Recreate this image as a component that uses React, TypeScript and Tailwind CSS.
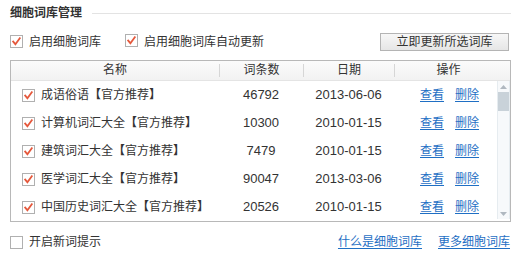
import React from "react";

const font = { fontFamily: '"Liberation Sans", "Noto Sans CJK SC", sans-serif' };

function Check({ checked }: { checked: boolean }) {
  return (
    <span className="inline-flex h-[13px] w-[13px] shrink-0 items-center justify-center border border-[#b0b0b0] bg-white">
      {checked && (
        <svg width="11" height="11" viewBox="0 0 11 11">
          <path d="M2.2 5.6 L4.4 8.2 L8.8 2.2" fill="none" stroke="#e5583c" strokeWidth="1.8" strokeLinecap="square" />
        </svg>
      )}
    </span>
  );
}

const rows = [
  { name: "成语俗语", count: "46792", date: "2013-06-06" },
  { name: "计算机词汇大全", count: "10300", date: "2010-01-15" },
  { name: "建筑词汇大全", count: "7479", date: "2010-01-15" },
  { name: "医学词汇大全", count: "90047", date: "2013-03-06" },
  { name: "中国历史词汇大全", count: "20526", date: "2010-01-15" },
];

export default function App() {
  return (
    <div className="relative h-[266px] w-[522px] overflow-hidden bg-white text-[12px] text-[#333]" style={font}>
      {/* title */}
      <div className="flex h-[26px] items-center pl-[10px] pr-[11px]">
        <span className="text-[12px] font-bold text-[#333]">细胞词库管理</span>
        <div className="ml-[10px] h-px flex-1 bg-[#e3e3e3]" />
      </div>
      {/* options */}
      <div className="mt-[6px] flex h-[19px] items-center pl-[10px] pr-[13px]">
        <Check checked />
        <span className="ml-[6px]">启用细胞词库</span>
        <span className="ml-[24px]"><Check checked /></span>
        <span className="ml-[6px]">启用细胞词库自动更新</span>
        <button className="ml-auto h-[18px] w-[129px] border border-[#b4b4b4] bg-gradient-to-b from-[#f7f7f7] to-[#e6e6e6] text-[12px] leading-[16px] text-[#333]">
          立即更新所选词库
        </button>
      </div>
      {/* table */}
      <div className="ml-[10px] mt-[9px] h-[162px] w-[501px] border border-[#b8b8b8]">
        <div className="flex h-[20px] border-b border-[#e4e4e4] bg-gradient-to-b from-[#fbfbfb] to-[#f2f2f2] leading-[19px]">
          <div className="w-[208px] text-center">名称</div>
          <div className="my-[3px] w-px bg-[#d6d6d6]" />
          <div className="w-[83px] text-center">词条数</div>
          <div className="my-[3px] w-px bg-[#d6d6d6]" />
          <div className="w-[90px] text-center">日期</div>
          <div className="my-[3px] w-px bg-[#d6d6d6]" />
          <div className="flex-1 pr-[8px] text-center">操作</div>
        </div>
        <div className="flex h-[140px]">
          <div className="flex-1">
            {rows.map((r) => (
              <div key={r.name} className="flex h-[28px] items-center">
                <div className="flex w-[208px] items-center pl-[11px]">
                  <Check checked />
                  <span className="ml-[6px]">{r.name}</span>
                  <span className="font-bold">【</span>
                  <span>官方推荐</span>
                  <span className="font-bold">】</span>
                </div>
                <div className="w-[84px] text-center text-[13px]">{r.count}</div>
                <div className="w-[91px] text-center text-[13px]">{r.date}</div>
                <div className="flex flex-1 gap-[11px] pl-[26px] text-[#1f6fc4]">
                  <span className="underline underline-offset-2">查看</span>
                  <span className="underline underline-offset-2">删除</span>
                </div>
              </div>
            ))}
          </div>
          <div className="mb-[2px] flex w-[13px] flex-col border-x border-[#e6ecf0] bg-[#f7f9fb]">
            <div className="flex h-[11px] items-center justify-center">
              <svg width="7" height="4" viewBox="0 0 7 4"><path d="M0 4 L3.5 0 L7 4 Z" fill="#b0b8c0" /></svg>
            </div>
            <div className="h-[19px] bg-[#c9d2d9]" />
            <div className="flex-1" />
            <div className="flex h-[11px] items-center justify-center">
              <svg width="7" height="4" viewBox="0 0 7 4"><path d="M0 0 L3.5 4 L7 0 Z" fill="#b0b8c0" /></svg>
            </div>
          </div>
        </div>
      </div>
      {/* bottom */}
      <div className="mt-[12px] flex h-[16px] items-center pl-[10px] pr-[12px]">
        <Check checked={false} />
        <span className="ml-[6px]">开启新词提示</span>
        <span className="ml-auto text-[#1f6fc4] underline underline-offset-2">什么是细胞词库</span>
        <span className="ml-[16px] text-[#1f6fc4] underline underline-offset-2">更多细胞词库</span>
      </div>
    </div>
  );
}
